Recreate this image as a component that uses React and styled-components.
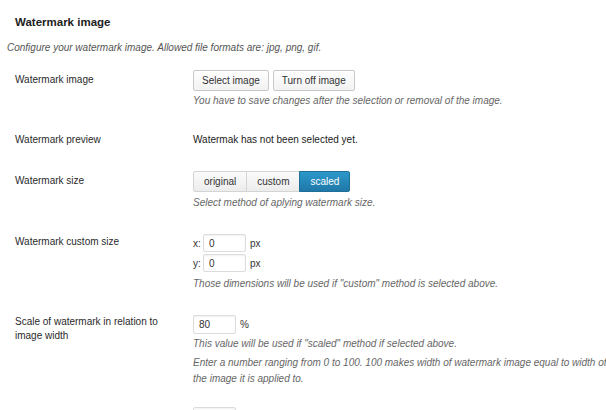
import React from "react";
import styled, { createGlobalStyle } from "styled-components";

const Global = createGlobalStyle`
  html, body { margin: 0; padding: 0; background: #fff; }
  body {
    font-family: "Liberation Sans", Arial, sans-serif;
    color: #222;
    overflow: hidden;
  }
`;

const Page = styled.div`
  box-sizing: border-box;
  padding: 15px 0 0 7px;
  width: 606px;
  height: 410px;
  overflow: hidden;
`;

const Heading = styled.h3`
  margin: 0 0 0 8px;
  font-size: 11.5px;
  line-height: 14px;
  font-weight: bold;
  color: #222;
`;

const Description = styled.p`
  margin: 11.5px 0 0 0;
  font-size: 10px;
  line-height: 14px;
  font-style: italic;
  color: #555;
`;

const Row = styled.div`
  display: grid;
  grid-template-columns: 178px 1fr;
  padding-left: 8px;
  margin-top: ${(p) => p.$gap}px;
`;

const Label = styled.div`
  font-size: 10px;
  line-height: 14px;
  color: #2a2a2a;
  padding-top: ${(p) => p.$offset || 0}px;
`;

const Field = styled.div`
  display: flex;
  flex-direction: column;
  align-items: flex-start;
  min-width: 0;
`;

const Plain = styled.div`
  font-size: 10px;
  line-height: 14px;
  color: #222;
`;

const Buttons = styled.div`
  display: flex;
  gap: 4px;
`;

const Button = styled.button`
  height: 21px;
  padding: 0 8px;
  font-family: inherit;
  font-size: 10px;
  color: #333;
  background: linear-gradient(#fefefe, #f2f2f2);
  border: 1px solid #c8c8c8;
  border-radius: 2px;
  box-shadow: inset 0 1px 0 #fff;
`;

const Group = styled.div`
  display: flex;
`;

const Segment = styled.button`
  height: 21px;
  padding: 0 10px;
  font-family: inherit;
  font-size: 10px;
  margin-left: -1px;
  color: ${(p) => (p.$active ? "#fff" : "#333")};
  background: ${(p) =>
    p.$active
      ? "linear-gradient(#2c98cb, #1f78a8)"
      : "linear-gradient(#fbfbfb, #ececec)"};
  border: 1px solid ${(p) => (p.$active ? "#1d6f98" : "#d4d4d4")};
  border-radius: 0;
  &:first-child {
    margin-left: 0;
    border-radius: 2px 0 0 2px;
  }
  &:last-child {
    border-radius: 0 2px 2px 0;
  }
`;

const Hint = styled.p`
  margin: ${(p) => p.$top || 0}px 0 0 0;
  font-size: 10px;
  line-height: ${(p) => p.$lh || 14}px;
  font-style: italic;
  color: #666;
  white-space: nowrap;
`;

const InputLine = styled.div`
  display: flex;
  align-items: center;
  gap: 4px;
  margin-top: ${(p) => p.$top || 0}px;
  font-size: 10px;
  color: #333;
`;

const Axis = styled.span`
  width: 6px;
  font-size: 10px;
  color: #333;
`;

const Input = styled.input`
  box-sizing: border-box;
  width: ${(p) => p.$w || 43}px;
  height: ${(p) => p.$h || 18}px;
  padding: 0 5px;
  font-family: inherit;
  font-size: 10px;
  color: #333;
  background: #fff;
  border: 1px solid #dcdcdc;
  border-radius: 2px;
  box-shadow: inset 0 1px 2px rgba(0, 0, 0, 0.06);
  outline: none;
`;

const Unit = styled.span`
  font-size: 10px;
  color: #333;
`;

export default function App() {
  return (
    <>
      <Global />
      <Page>
        <Heading>Watermark image</Heading>
        <Description>
          Configure your watermark image. Allowed file formats are: jpg, png, gif.
        </Description>

        <Row $gap={15.5}>
          <Label $offset={2.5}>Watermark image</Label>
          <Field>
            <Buttons>
              <Button>Select image</Button>
              <Button>Turn off image</Button>
            </Buttons>
            <Hint $top={2.5}>
              You have to save changes after the selection or removal of the image.
            </Hint>
          </Field>
        </Row>

        <Row $gap={25.5}>
          <Label>Watermark preview</Label>
          <Field>
            <Plain>Watermak has not been selected yet.</Plain>
          </Field>
        </Row>

        <Row $gap={24}>
          <Label $offset={2.5}>Watermark size</Label>
          <Field>
            <Group>
              <Segment>original</Segment>
              <Segment>custom</Segment>
              <Segment $active>scaled</Segment>
            </Group>
            <Hint $top={4}>Select method of aplying watermark size.</Hint>
          </Field>
        </Row>

        <Row $gap={24}>
          <Label $offset={1}>Watermark custom size</Label>
          <Field>
            <InputLine>
              <Axis>x:</Axis>
              <Input defaultValue="0" />
              <Unit>px</Unit>
            </InputLine>
            <InputLine $top={2}>
              <Axis>y:</Axis>
              <Input defaultValue="0" />
              <Unit>px</Unit>
            </InputLine>
            <Hint $top={5}>
              Those dimensions will be used if "custom" method is selected above.
            </Hint>
          </Field>
        </Row>

        <Row $gap={24}>
          <Label>
            Scale of watermark in relation to
            <br />
            image width
          </Label>
          <Field>
            <InputLine>
              <Input $h={19} defaultValue="80" />
              <Unit>%</Unit>
            </InputLine>
            <Hint $top={3}>
              This value will be used if "scaled" method if selected above.
            </Hint>
            <Hint $top={4} $lh={16}>
              Enter a number ranging from 0 to 100. 100 makes width of watermark
              image equal to width of
              <br />
              the image it is applied to.
            </Hint>
          </Field>
        </Row>

        <Row $gap={20}>
          <Label />
          <Field>
            <InputLine>
              <Input $h={19} />
            </InputLine>
          </Field>
        </Row>
      </Page>
    </>
  );
}
